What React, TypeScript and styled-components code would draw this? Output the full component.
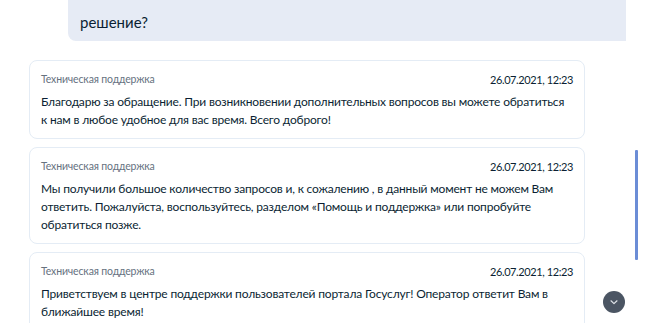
import React, { useLayoutEffect, useRef } from "react";
import styled, { createGlobalStyle } from "styled-components";

const Global = createGlobalStyle`
  html, body { margin: 0; padding: 0; background: #ffffff; }
  body { font-family: Lato, "Noto Sans", sans-serif; -webkit-font-smoothing: antialiased; }
`;

const Page = styled.div`
  position: relative;
  display: flex;
  width: 650px;
  height: 333px;
  gap: 9px;
  padding-right: 12px;
  box-sizing: border-box;
  background: #fff;
`;

const Viewport = styled.div`
  flex: 1;
  height: 323px;
  overflow: hidden;
`;

const List = styled.div`
  display: flex;
  flex-direction: column;
  padding-bottom: 20px;
`;

const UserBubble = styled.div`
  margin-left: 68px;
  margin-bottom: 19px;
  padding: 20px 12px 8px;
  background: #e6ebf5;
  border-radius: 8px 8px 0 8px;
  color: #0b1f33;
  font-size: 15px;
  line-height: 22px;
`;

const Card = styled.div`
  width: 556px;
  box-sizing: border-box;
  margin-left: 29px;
  margin-bottom: 8px;
  padding: 11px 11px 9px;
  border: 1px solid #e4ecf5;
  border-radius: 8px;
  background: #fff;
`;

const CardHead = styled.div`
  display: flex;
  justify-content: space-between;
  align-items: center;
  height: 14px;
  margin-bottom: 7px;
`;

const Author = styled.span`
  font-size: 10.5px;
  letter-spacing: -0.15px;
  color: #66727f;
`;

const Time = styled.span`
  font-size: 11px;
  letter-spacing: -0.4px;
  color: #0b1f33;
`;

const Body = styled.div`
  font-size: 12px;
  letter-spacing: -0.18px;
  line-height: 18px;
  color: #0b1f33;
`;

const Track = styled.div`
  width: 3px;
  flex: 0 0 3px;
`;

const Thumb = styled.div`
  width: 3px;
  background: #6b8dd6;
  border-radius: 1px;
`;

const DownButton = styled.button`
  position: absolute;
  right: 25px;
  bottom: 20px;
  width: 22px;
  height: 22px;
  padding: 0;
  border: none;
  border-radius: 50%;
  background: #4b5563;
  display: flex;
  align-items: center;
  justify-content: center;
  cursor: pointer;
`;

const messages = [
  "Благодарю за обращение. При возникновении дополнительных вопросов вы можете обратиться к нам в любое удобное для вас время. Всего доброго!",
  "Мы получили большое количество запросов и, к сожалению , в данный момент не можем Вам ответить. Пожалуйста, воспользуйтесь, разделом «Помощь и поддержка» или попробуйте обратиться позже.",
  "Приветствуем в центре поддержки пользователей портала Госуслуг! Оператор ответит Вам в ближайшее время!",
];

export default function App() {
  const viewRef = useRef<HTMLDivElement>(null);
  const bubbleRef = useRef<HTMLDivElement>(null);

  useLayoutEffect(() => {
    const v = viewRef.current;
    const b = bubbleRef.current;
    if (v && b) {
      v.scrollTop = b.offsetTop - v.offsetTop + b.offsetHeight - 41;
    }
  }, []);

  return (
    <>
      <Global />
      <Page>
        <Viewport ref={viewRef}>
          <List>
            <UserBubble ref={bubbleRef}>решение?</UserBubble>
            {messages.map((text, i) => (
              <Card key={i}>
                <CardHead>
                  <Author>Техническая поддержка</Author>
                  <Time>26.07.2021, 12:23</Time>
                </CardHead>
                <Body>{text}</Body>
              </Card>
            ))}
          </List>
        </Viewport>
        <Track>
          <Thumb style={{ marginTop: 150, height: 110 }} />
        </Track>
        <DownButton aria-label="Вниз">
          <svg width="10" height="10" viewBox="0 0 10 10" fill="none">
            <path d="M2 3.8 L5 6.6 L8 3.8" stroke="#dfe3e8" strokeWidth="1.2" strokeLinecap="round" strokeLinejoin="round" />
          </svg>
        </DownButton>
      </Page>
    </>
  );
}
